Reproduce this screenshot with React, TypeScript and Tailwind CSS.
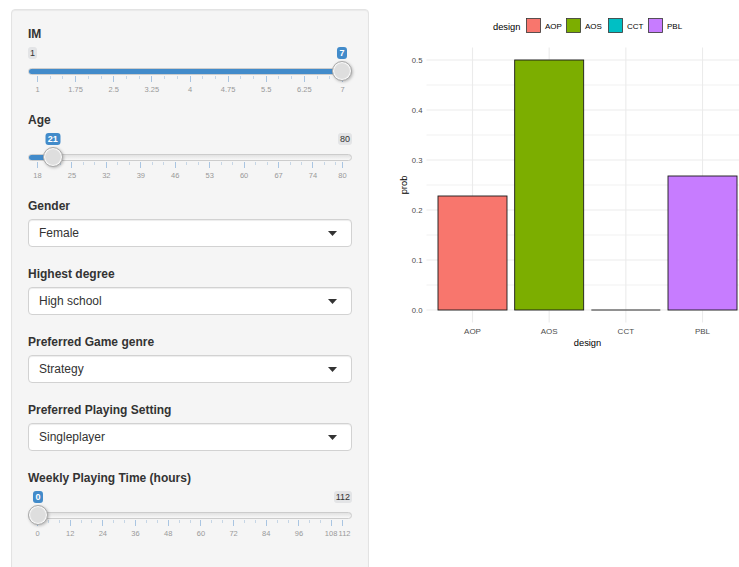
import React from 'react';

// sidebar inputs + bar chart of predicted probabilities

type SliderProps = {
  label: string;
  min: number;
  max: number;
  value: number;
  majors: number[];
};

const TRACK_W = 324;
const HANDLE = 20;
const GRID_L = 9.5;
const GRID_W = 305;

function minorTicks(majors: number[]) {
  const out: number[] = [];
  const step = majors[1] - majors[0];
  for (let i = 0; i < majors.length - 1; i++) {
    const a = majors[i];
    const b = majors[i + 1];
    [a + step / 3, a + (2 * step) / 3].forEach((m) => {
      if (m < b - 0.01) out.push(m);
    });
  }
  return out;
}

const RangeSlider = ({ label, min, max, value, majors }: SliderProps) => {
  const p = (value - min) / (max - min);
  const handleLeft = p * (TRACK_W - HANDLE);
  const pos = (v: number) => GRID_L + ((v - min) / (max - min)) * GRID_W;
  // keep the last two grid labels from running into each other
  const n = majors.length;
  const crowded = pos(majors[n - 1]) - pos(majors[n - 2]) < 20;
  const labelPos = (i: number) => {
    const x = pos(majors[i]);
    if (!crowded) return x;
    if (i === n - 1) return x + 2;
    if (i === n - 2) return x - 0.5;
    return x;
  };

  return (
    <div className="mb-[5px]">
      <div className="text-[12px] leading-[17px] font-bold text-[#333]">{label}</div>
      <div className="mt-[4px] flex h-[60px] flex-col">
        {/* min / max / current value */}
        <div className="relative flex h-[14px] items-start justify-between">
          <span className={`h-[12px] px-[2px] rounded-[3px] bg-[#e3e4e6] text-[9px] leading-[12px] text-[#333] ${p > 0.1 ? '' : 'invisible'}`}>
            {min}
          </span>
          <span className={`h-[12px] px-[2px] rounded-[3px] bg-[#e3e4e6] text-[9px] leading-[12px] text-[#333] ${p < 0.9 ? '' : 'invisible'}`}>
            {max}
          </span>
          <span
            className="absolute top-0 h-[12px] px-[2.5px] rounded-[3px] bg-[#428bca] text-[9px] leading-[12px] font-bold text-white -translate-x-1/2"
            style={{ left: handleLeft + HANDLE / 2 }}
          >
            {value}
          </span>
        </div>

        {/* track with filled part and handle */}
        <div className="relative h-[15px] pt-[7px]">
          <div className="relative h-[7px] rounded-full border border-[#cccccc] bg-gradient-to-b from-[#e2e2e2] to-[#f8f8f8] overflow-hidden">
            {value > min && (
              <div className="h-full bg-[#428bca] -mt-px" style={{ width: handleLeft + HANDLE / 2, height: 7 }} />
            )}
          </div>
          <div
            className="absolute top-0 z-10 w-[20px] h-[20px] rounded-full border border-[#ababab] bg-[#dedede] shadow-[inset_0_0_1px_1px_#fff,1px_1px_3px_rgba(0,0,0,0.25)]"
            style={{ left: handleLeft }}
          />
        </div>

        {/* grid ticks */}
        <div className="relative h-[9px]">
          {majors.map((m) => (
            <div key={'M' + m} className="absolute top-0 w-px h-[6px] bg-[#a9c5e2]" style={{ left: pos(m) - 0.5 }} />
          ))}
          {minorTicks(majors).map((m) => (
            <div key={'m' + m} className="absolute top-0 w-px h-[3px] bg-[#c6d6e6]" style={{ left: pos(m) - 0.5 }} />
          ))}
        </div>

        {/* grid labels */}
        <div className="relative h-[10px]">
          {majors.map((m, i) => (
            <span
              key={'L' + m}
              className="absolute top-0 text-[7.5px] leading-[10px] text-[#999] -translate-x-1/2 whitespace-nowrap"
              style={{ left: labelPos(i) }}
            >
              {m}
            </span>
          ))}
        </div>
      </div>
    </div>
  );
};

const SelectInput = ({ label, value }: { label: string; value: string }) => (
  <div className="mb-[19px]">
    <div className="text-[12px] leading-[17px] font-bold text-[#333]">{label}</div>
    <div className="mt-[4px] h-[28px] flex items-center justify-between bg-white border border-[#d2d2d2] rounded-[4px] pl-[10px] pr-[14px] shadow-[inset_0_1px_1px_rgba(0,0,0,0.075)]">
      <span className="text-[12px] text-[#333]">{value}</span>
      <svg width="9" height="5" viewBox="0 0 9 5">
        <path d="M0 0 L9 0 L4.5 5 Z" fill="#333" />
      </svg>
    </div>
  </div>
);

// chart geometry
const Y0 = 310;
const yv = (v: number) => Y0 - v * 500;
const CAT_W = 76.67;
const CX0 = 92.5;
const bars = [
  { name: 'AOP', prob: 0.228, fill: '#F8766D' },
  { name: 'AOS', prob: 0.5, fill: '#7CAE00' },
  { name: 'CCT', prob: 0, fill: '#00BFC4' },
  { name: 'PBL', prob: 0.268, fill: '#C77CFF' },
];
const legendKeys = [
  { name: 'AOP', x: 146, fill: '#F8766D' },
  { name: 'AOS', x: 186, fill: '#7CAE00' },
  { name: 'CCT', x: 228, fill: '#00BFC4' },
  { name: 'PBL', x: 268, fill: '#C77CFF' },
];

const ProbChart = () => (
  <svg width="359" height="360" viewBox="0 0 359 360" fontFamily="Liberation Sans, Arial, sans-serif">
    {/* legend */}
    <text x="113" y="30" fontSize="9.3" fill="#000">design</text>
    {legendKeys.map((k) => (
      <g key={k.name}>
        <rect x={k.x + 0.5} y={18.5} width={14} height={14} fill={k.fill} stroke="#333" strokeWidth="0.8" />
        <text x={k.x + 19} y={29.3} fontSize="8" fill="#000">{k.name}</text>
      </g>
    ))}

    {/* grid */}
    {[0.05, 0.15, 0.25, 0.35, 0.45].map((v) => (
      <line key={'mn' + v} x1="46.5" x2="359" y1={yv(v)} y2={yv(v)} stroke="#ebebeb" strokeWidth="0.7" />
    ))}
    {[0, 0.1, 0.2, 0.3, 0.4, 0.5].map((v) => (
      <line key={'mj' + v} x1="46.5" x2="359" y1={yv(v)} y2={yv(v)} stroke="#ebebeb" strokeWidth="1.1" />
    ))}
    {bars.map((b, i) => (
      <line key={'v' + b.name} x1={CX0 + i * CAT_W} x2={CX0 + i * CAT_W} y1="47.5" y2="322.5" stroke="#ebebeb" strokeWidth="1.1" />
    ))}

    {/* bars */}
    {bars.map((b, i) => {
      const cx = CX0 + i * CAT_W;
      const x = cx - 34.5;
      return b.prob > 0 ? (
        <rect key={b.name} x={x} y={yv(b.prob)} width={69} height={Y0 - yv(b.prob)} fill={b.fill} stroke="#1a1a1a" strokeWidth="0.9" />
      ) : (
        <line key={b.name} x1={x} x2={x + 69} y1={Y0} y2={Y0} stroke="#1a1a1a" strokeWidth="0.9" />
      );
    })}

    {/* axes text */}
    {[0, 0.1, 0.2, 0.3, 0.4, 0.5].map((v) => (
      <text key={'yl' + v} x="42.5" y={yv(v) + 2.8} fontSize="7.7" fill="#4d4d4d" textAnchor="end">
        {v.toFixed(1)}
      </text>
    ))}
    {bars.map((b, i) => (
      <text key={'xl' + b.name} x={CX0 + i * CAT_W} y="334.3" fontSize="8" fill="#4d4d4d" textAnchor="middle">
        {b.name}
      </text>
    ))}
    <text x="207.5" y="346" fontSize="9.3" fill="#000" textAnchor="middle">design</text>
    <text transform="translate(26.5 185) rotate(-90)" fontSize="9.3" fill="#000" textAnchor="middle">prob</text>
  </svg>
);

export default function App() {
  return (
    <div className="flex h-[567px] w-[739px] gap-[11px] overflow-hidden bg-white pl-[11px] pt-[9px] font-['Liberation_Sans',Arial,sans-serif]">
      <div className="w-[358px] shrink-0 rounded-[4px] border border-[#e3e3e3] bg-[#f5f5f5] px-[16px] pt-[16px] pb-[24px] shadow-[inset_0_1px_1px_rgba(0,0,0,0.05)] self-start">
        <RangeSlider label="IM" min={1} max={7} value={7} majors={[1, 1.75, 2.5, 3.25, 4, 4.75, 5.5, 6.25, 7]} />
        <RangeSlider label="Age" min={18} max={80} value={21} majors={[18, 25, 32, 39, 46, 53, 60, 67, 74, 80]} />
        <SelectInput label="Gender" value="Female" />
        <SelectInput label="Highest degree" value="High school" />
        <SelectInput label="Preferred Game genre" value="Strategy" />
        <SelectInput label="Preferred Playing Setting" value="Singleplayer" />
        <RangeSlider label="Weekly Playing Time (hours)" min={0} max={112} value={0} majors={[0, 12, 24, 36, 48, 60, 72, 84, 96, 108, 112]} />
      </div>
      <div className="-mt-[9px] shrink-0">
        <ProbChart />
      </div>
    </div>
  );
}
